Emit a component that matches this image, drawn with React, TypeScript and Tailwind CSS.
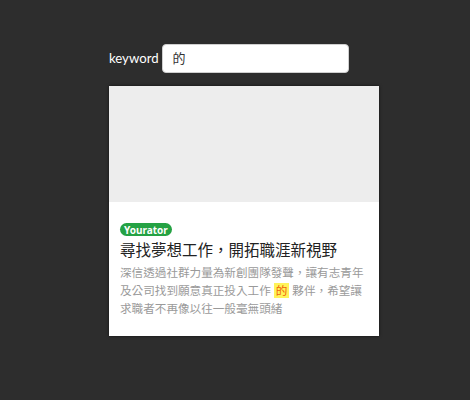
import React from 'react';

const CJK = "font-['Noto_Sans','Noto_Sans_CJK_TC',sans-serif]";

// Search row + single result card
const App: React.FC = () => {
  return (
    <div className={`min-h-[400px] w-[470px] bg-[#2d2d2d] pt-[44px] pl-[109px] ${CJK}`}>
      {/* Keyword input */}
      <div className="flex items-center gap-[3px]">
        <label className="font-['Lato',sans-serif] text-[13.2px] text-white">keyword</label>
        <div className="flex h-[29px] w-[187px] items-center rounded-[4px] border border-[#cfcfcf] bg-white pl-[10px] text-[13px] text-[#333]">
          的
        </div>
      </div>

      {/* Result card */}
      <div className="mt-[13px] w-[270px] bg-white shadow-[0_0_3px_rgba(0,0,0,0.6)]">
        <div className="h-[116px] bg-[#ededed]" />
        <div className="px-[11px] pt-[21px] pb-[18px]">
          <div className="flex h-[13px] w-fit items-center rounded-full bg-[#25a244] px-[4px] text-[10px] font-bold leading-none text-white">
            Yourator
          </div>
          <h3 className="mt-[3px] text-[15.5px] leading-[22px] text-[#222]">尋找夢想工作，開拓職涯新視野</h3>
          <p className="mt-[3px] text-[11.6px] leading-[18px] text-[#9a9a9a]">
            深信透過社群力量為新創團隊發聲，讓有志青年及公司找到願意真正投入工作{' '}
            <span className="bg-[#fff35a] px-[2px] text-[#f0600a]">的</span> 夥伴，希望讓求職者不再像以往一般毫無頭緒
          </p>
        </div>
      </div>
    </div>
  );
};

export default App;
